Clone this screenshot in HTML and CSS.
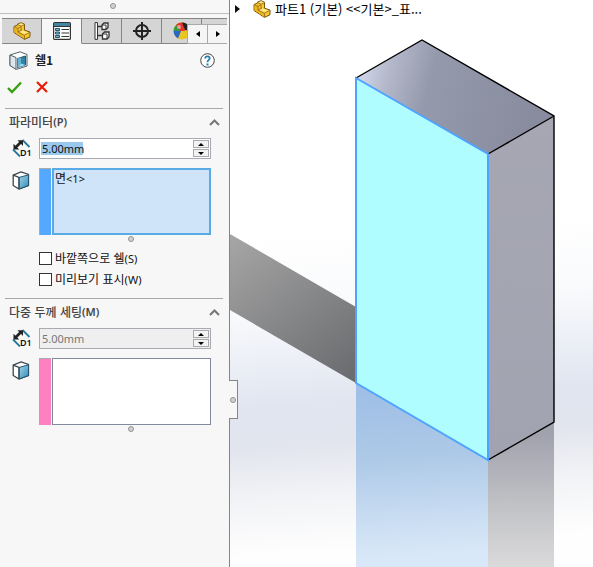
FILE: index.html
```html
<!DOCTYPE html>
<html lang="ko">
<head>
<meta charset="utf-8">
<meta name="viewport" content="width=device-width, initial-scale=1">
<title>쉘1</title>
<link rel="stylesheet" href="styles.css">
</head>
<body>
<svg class="defs" aria-hidden="true">
  <defs>
    <linearGradient id="glass" x1="0" y1="0" x2="1" y2="1"><stop offset="0" stop-color="#a5d8ec"/><stop offset="1" stop-color="#3188b5"/></linearGradient>
    <symbol id="part" viewBox="0 0 18 18">
      <path d="M1 4.500 4.500 3V2L8 .7l3.500 1.500v6L17 10v4.800L11.500 17.400 1 10.500z" fill="#f5c52c" stroke="#795614"/>
      <path d="M1.500 5 5 6.500V10l6.500 4v3L1.500 10.200z" fill="#efb51c"/>
      <path d="M5 2.500 8 1.300 11 2.500 8 4zM6 9.500l3-1.300 7 2.300-4.300 2z" fill="#ffe781"/>
      <path d="M1.500 4.800 5 6.500V10l6.500 3.500v3.500M5 6.500l3-2V8.500M8 4.200 4.500 2.500M8 4.200l3.500-1.500M11.500 13l5-2.500M5 10l4-2" fill="none" stroke="#8d661a" stroke-width=".8"/>
    </symbol>
    <symbol id="dimension" viewBox="0 0 19 18">
      <path d="M10.500 1l7 7M1 10.500l7 7" stroke="#23789d" stroke-width="1.800"/>
      <path d="M3.500 8.500 8.500 3.500" stroke="#222" stroke-width="2.600"/>
      <path d="M5.500 1.300H11v5.700zM1.500 4.800V10.500h5.700z" fill="#222"/>
      <text class="dim-text" x="8" y="17">D1</text>
    </symbol>
    <symbol id="face" viewBox="0 0 18 19">
      <path d="M1.200 4.200 9 1l7.500 2.500v11L7 18l-5.800-3.500z" fill="#fff" stroke="#38464d" stroke-width="1.300"/>
      <path d="M7 6.500 16.500 3.800v10.700L7 18z" fill="url(#glass)" stroke="#24566c"/>
      <path d="M1.200 4.200 7 6.500V18" fill="none" stroke="#38464d" stroke-width="1.300"/>
    </symbol>
    <symbol id="chevron" viewBox="0 0 11 7"><path d="M1 6l4.500-4.500L10 6" fill="none" stroke="#777" stroke-width="2"/></symbol>
  </defs>
</svg>
<div class="app">
  <aside class="panel">
    <div class="grip"><span class="dot"></span></div>
    <nav class="tabs" aria-label="관리자">
      <button class="tab" aria-label="피처"><svg width="18" height="18"><use href="#part"/></svg></button>
      <button class="tab active" aria-label="속성"><svg width="18" height="18" viewBox="0 0 18 18">
        <rect x=".6" y=".6" width="16.800" height="16.800" rx="1" fill="#fff" stroke="#333" stroke-width="1.200"/>
        <path d="M1 1h16v3H1z" fill="#43869f"/><path d="M1 4.500h16" stroke="#333"/>
        <path d="M2.500 6.500h4v2h-4zM2.500 10h4v2h-4zM2.500 13.500h4v2h-4z" fill="#75b9d3" stroke="#24566c"/>
        <path d="M8.500 7.500H16M8.500 11H16M8.500 14.500H16" stroke="#333"/></svg></button>
      <button class="tab" aria-label="설정"><svg width="16" height="18" viewBox="0 0 16 18">
        <path d="M1 .6h2.500v16.800H1z" fill="#fff" stroke="#333"/>
        <path d="M3.500 4.500H8M3.500 13.500H8" stroke="#333" stroke-width="1.400"/>
        <path d="M8 3l2-2h4v4.500L12 7.500H8zM8.500 12l2-2H15v5l-2 2H8.500z" fill="#fff" stroke="#333" stroke-width="1.300"/>
        <path d="M8 3h4v4.500M8.500 12H13v5" fill="none" stroke="#333"/></svg></button>
      <button class="tab" aria-label="치수"><svg width="18" height="18" viewBox="0 0 18 18"><circle cx="9" cy="9" r="6" fill="none" stroke="#222" stroke-width="2"/><path d="M9 0v18M0 9h18" stroke="#222" stroke-width="2"/></svg></button>
      <button class="tab" aria-label="표시"><svg width="18" height="18" viewBox="0 0 18 18">
        <circle cx="9" cy="9" r="8.500" fill="#e9c51f"/>
        <path d="M8 9H.6A8.500 8.500 0 0 1 4 2.200z" fill="#319d3e"/><path d="M3 3a8.500 8.500 0 0 1 8-2.200L12 9H7z" fill="#e6342c"/>
        <path d="M8 9 .6 9A8.500 8.500 0 0 0 5 16.400z" fill="#2868c8"/><path d="M9 .6a8.500 8.500 0 0 1 8.500 8.400L12 8z" fill="#222"/>
        <circle cx="6" cy="5" r="2" fill="#fff" opacity=".5"/></svg></button>
      <span class="tab-rest"></span>
      <div class="tab-scroll">
        <button aria-label="이전"><svg width="4" height="6"><path d="M4 0v6L0 3z"/></svg></button>
        <button aria-label="다음"><svg width="4" height="6"><path d="M0 0v6l4-3z"/></svg></button>
      </div>
    </nav>

    <header class="title-row">
      <svg width="19" height="19" viewBox="0 0 19 19">
        <path d="M1 4 11 .8l7 2.700v11.500L7.500 18.300 1 14.500z" fill="#fff" stroke="#53626a"/>
        <path d="M1 4l6 2.500v11.800L1 14.500z" fill="#dfe7ea" stroke="#53626a"/>
        <path d="M8.500 7.500 16.500 5v9l-8 2.600z" fill="#2f86ad" stroke="#24566c"/>
        <path d="M8.500 16.500 12 12.500l4.500 1.500z" fill="#a5dcf0"/><path d="M8.500 7.500 12 6.400v6.100l-3.500 4z" fill="#68b4d2"/></svg>
      <h1>쉘1</h1>
      <button class="help" aria-label="도움말"><svg width="15" height="15" viewBox="0 0 15 15"><circle cx="7.500" cy="7.500" r="6.800" fill="#fff" stroke="#444"/><path d="M5.200 5.500c.2-3 4.800-2.600 4.500 0C9.500 7 7.500 7 7.500 9.200" fill="none" stroke="#247eac" stroke-width="1.800"/><path d="M6.500 10.500h2v2h-2z" fill="#247eac"/></svg></button>
    </header>
    <div class="actions">
      <button aria-label="확인"><svg width="15" height="13" viewBox="0 0 15 13"><path d="M1 7l4 4 9-9.500" fill="none" stroke="#36a00e" stroke-width="2.400"/></svg></button>
      <button aria-label="취소"><svg width="12" height="12" viewBox="0 0 12 12"><path d="M1 1l10 10M11 1 1 11" stroke="#e51d08" stroke-width="2.200"/></svg></button>
    </div>

    <section class="group">
      <h2>파라미터<b>(P)</b><svg width="11" height="7"><use href="#chevron"/></svg></h2>
      <div class="row">
        <svg width="19" height="18"><use href="#dimension"/></svg>
        <div class="spin">
          <input class="selected" type="text" value="5.00mm" aria-label="두께">
          <div class="steps"><button aria-label="증가"><svg width="6" height="3"><path d="M0 3h6L3 0z"/></svg></button><button aria-label="감소"><svg width="6" height="3"><path d="M0 0h6L3 3z"/></svg></button></div>
        </div>
      </div>
      <div class="row faces">
        <svg width="18" height="19"><use href="#face"/></svg>
        <div class="pick blue"><ul role="listbox" aria-label="제거할 면"><li role="option" aria-selected="true">면<span class="latin">&lt;1&gt;</span></li></ul></div>
      </div>
      <div class="resize"><span class="dot"></span></div>
      <div class="checks">
        <label><input type="checkbox"><span>바깥쪽으로 쉘<span class="latin">(S)</span></span></label>
        <label><input type="checkbox"><span>미리보기 표시<span class="latin">(W)</span></span></label>
      </div>
    </section>

    <section class="group">
      <h2>다중 두께 세팅<b>(M)</b><svg width="11" height="7"><use href="#chevron"/></svg></h2>
      <div class="row">
        <svg width="19" height="18"><use href="#dimension"/></svg>
        <div class="spin off">
          <input type="text" value="5.00mm" aria-label="다중 두께" disabled>
          <div class="steps"><button aria-label="증가"><svg width="6" height="3"><path d="M0 3h6L3 0z"/></svg></button><button aria-label="감소"><svg width="6" height="3"><path d="M0 0h6L3 3z"/></svg></button></div>
        </div>
      </div>
      <div class="row faces">
        <svg width="18" height="19"><use href="#face"/></svg>
        <div class="pick pink"><ul role="listbox" aria-label="다중 두께 면"></ul></div>
      </div>
      <div class="resize"><span class="dot"></span></div>
    </section>
    <button class="collapse" aria-label="패널 접기"><span class="dot"></span></button>
  </aside>

  <main class="view">
    <svg class="scene" viewBox="0 0 363 567" preserveAspectRatio="xMinYMin slice" role="img" aria-label="파트1">
      <defs>
        <linearGradient id="sky" gradientUnits="userSpaceOnUse" x1="160" y1="0" x2="200" y2="567">
          <stop offset=".4" stop-color="#fff"/><stop offset=".53" stop-color="#f9fafc"/><stop offset=".62" stop-color="#eceff6"/><stop offset=".7" stop-color="#e1e5f0"/><stop offset=".77" stop-color="#e2e5ee"/><stop offset=".86" stop-color="#f2f3f6"/><stop offset=".96" stop-color="#fefefe"/>
        </linearGradient>
        <linearGradient id="top" gradientUnits="userSpaceOnUse" x1="128" y1="76" x2="300" y2="120"><stop offset="0" stop-color="#d2d7ec"/><stop offset=".16" stop-color="#b4b8ca"/><stop offset=".4" stop-color="#9499ac"/><stop offset="1" stop-color="#898c9f"/></linearGradient>
        <linearGradient id="shade" gradientUnits="userSpaceOnUse" x1="0" y1="240" x2="110" y2="380"><stop offset="0" stop-color="#a5a5a5"/><stop offset="1" stop-color="#6c6d70"/></linearGradient>
        <linearGradient id="side" x1="0" y1="0" x2="0" y2="1"><stop offset="0" stop-color="#a6a7b3"/><stop offset="1" stop-color="#a2a3b0"/></linearGradient>
        <linearGradient id="mirror" gradientUnits="userSpaceOnUse" x1="0" y1="400" x2="10" y2="567"><stop offset="0" stop-color="#9fbfe6"/><stop offset=".4" stop-color="#adc9e7"/><stop offset=".7" stop-color="#c4d9f0"/><stop offset="1" stop-color="#d9e8f8"/></linearGradient>
        <linearGradient id="mirror-side" gradientUnits="userSpaceOnUse" x1="0" y1="435" x2="0" y2="567"><stop offset="0" stop-color="#a1a2ad"/><stop offset=".5" stop-color="#bfc0c4"/><stop offset="1" stop-color="#dadadb"/></linearGradient>
      </defs>
      <path d="M0 0h363v567H0z" fill="url(#sky)"/>
      <path d="M0 234l126 73v76L0 310z" fill="url(#shade)"/>
      <path d="M126 383l132 77v107H126z" fill="url(#mirror)"/>
      <path d="M258 460l66-38v145h-66z" fill="url(#mirror-side)"/>
      <path d="M126 78l66-38 132 76-66 38z" fill="url(#top)"/>
      <path d="M258 154l66-38v306l-66 38z" fill="url(#side)"/>
      <path d="M126 78l66-38 132 76v306l-66 38M258 154l66-38" fill="none" stroke="#000" stroke-width="1.400"/>
      <path d="M126 78l132 76v306l-132-77z" fill="#b0fdff" stroke="#4da3ff" stroke-width="2"/>
    </svg>
    <div class="tree">
      <svg width="5" height="8"><path d="M0 0v8l5-4z" fill="#111"/></svg>
      <svg class="part-icon" width="18" height="18"><use href="#part"/></svg>
      <span>파트1 (기본) &lt;&lt;기본&gt;_표...</span>
    </div>
  </main>
</div>
</body>
</html>
```
FILE: styles.css
```css
* { box-sizing: border-box; }
body {
  margin: 0;
  font: 12px/16px "Noto Sans CJK KR", sans-serif;
  color: #111;
}
button { margin: 0; padding: 0; border: 0; background: none; display: flex; align-items: center; justify-content: center; }
svg { display: block; flex: none; }
.defs { position: absolute; width: 0; height: 0; }
.dim-text { font: 600 9px "Noto Sans", sans-serif; fill: #111; }
.latin { font-family: "Noto Sans", sans-serif; font-size: 11px; }

.app { display: flex; min-height: 100vh; }
.panel {
  position: relative;
  z-index: 1;
  flex: none;
  width: 230px;
  background: #f7f7f7;
  border-right: 1px solid #858585;
}
.dot {
  display: block;
  width: 6px;
  height: 6px;
  border: 1px solid #929292;
  border-radius: 50%;
  background: #d2d2d2;
}
.grip {
  display: flex;
  justify-content: center;
  height: 14px;
  padding: 3px 4px 0 0;
  border-bottom: 1px solid #bdbdbd;
}

.tabs {
  position: relative;
  display: flex;
  height: 26px;
  margin: 4px 2px 0;
  overflow: hidden;
}
.tab, .tab-rest {
  flex: none;
  width: 40px;
  background: #d5d5d5;
  border: solid #858585;
  border-width: 1px 1px 1px 0;
}
.tab.active { background: #f7f7f7; border-bottom-color: #f7f7f7; }
.tab-scroll { position: absolute; right: 0; bottom: 0; display: flex; }
.tab-scroll button {
  width: 20px;
  height: 20px;
  background: #f5f5f5;
  border: 1px solid #aaa;
  border-right-width: 0;
}

.title-row { display: flex; align-items: center; gap: 7px; margin: 6px 14px 0 9px; height: 20px; }
h1 { margin: 0; font-size: 12px; font-weight: 700; color: #222; }
.help { margin-left: auto; }
.actions { display: flex; align-items: center; gap: 14px; height: 34px; margin-left: 7px; }

.group { margin: 4px 6px 0 5px; border-top: 1px solid #a8a8a8; }
.group + .group { margin-top: 11px; }
h2 {
  display: flex;
  align-items: center;
  height: 29px;
  margin: 0;
  padding: 0 3px 3px 4px;
  font-size: 12px;
  font-weight: 500;
  color: #444;
}
h2 b { font-family: "Noto Sans", sans-serif; font-size: 11px; font-weight: 600; }
h2 svg { margin-left: auto; }
.row {
  display: grid;
  grid-template-columns: 27px minmax(0, 1fr);
  padding: 0 12px 0 7px;
  margin-bottom: 9px;
}
.row > svg { margin-top: 1px; }
.faces > svg { margin-top: 3px; }
.spin {
  display: flex;
  height: 21px;
  padding: 1px;
  background: #fff;
  border: 1px solid #a9abb2;
}
.spin input {
  flex: 1;
  min-width: 0;
  padding: 0 1px;
  border: 0;
  outline: 0;
  background: none;
  font: 11px/16px "Noto Sans", sans-serif;
  color: #111;
}
.spin .selected { background: linear-gradient(#9ac9ef, #9ac9ef) 0 2px / 42px 13px no-repeat; }
.spin.off { background: #efefef; }
.spin.off input { color: #777; }
.steps { display: grid; grid-template-rows: 1fr 1fr; gap: 1px; width: 16px; }
.steps button { background: #f3f3f3; border: 1px solid #aaa; }
.pick { display: flex; gap: 1px; height: 67px; }
.pick::before { content: ""; width: 11px; border: solid #aaa; border-width: 1px 0 0 1px; }
.blue::before { background: #55a8ff; }
.pink::before { background: #ff80c0; }
.pick ul {
  flex: 1;
  margin: 0;
  padding: 1px 3px;
  list-style: none;
  background: #fff;
  border: 1px solid #838aa0;
}
.pick.blue ul { padding: 0 1px; background: #cfe4f9; border: 2px solid #58abe5; }
.resize { display: flex; justify-content: center; margin: -8px 0 0 34px; padding-right: 1px; }
.checks { display: grid; gap: 5px; margin: 8px 0 0 34px; }
.checks label { display: flex; align-items: center; gap: 3px; height: 16px; }
.checks input {
  appearance: none;
  width: 13px;
  height: 13px;
  margin: 0;
  border: 1px solid #333;
  background: #fff;
}
.collapse {
  position: absolute;
  left: 229px;
  top: 380px;
  width: 9px;
  height: 39px;
  background: #f7f7f7;
  border: 1px solid #858585;
  border-left: 0;
}

.view { position: relative; flex: 1; min-width: 0; overflow: hidden; }
.scene { width: 100%; height: 100%; }
.tree {
  position: absolute;
  top: 0;
  left: 5px;
  display: flex;
  align-items: center;
  height: 18px;
  font-size: 13px;
  color: #000;
  white-space: nowrap;
}
.part-icon { margin: 0 4px 0 13px; }
```
